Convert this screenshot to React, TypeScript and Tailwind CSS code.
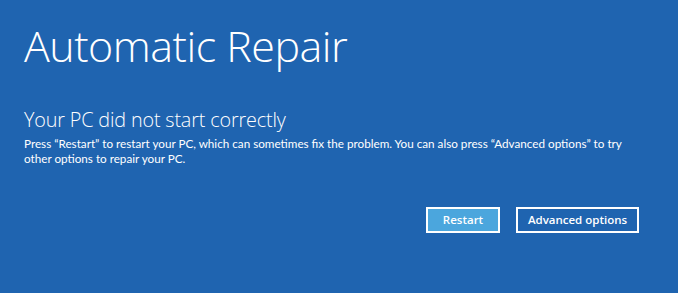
export default function App() {
  return (
    <div
      className="h-[293px] w-[678px] overflow-hidden bg-[#1f64b0] text-white"
      style={{ fontFamily: '"Open Sans", "Noto Sans", sans-serif' }}
    >
      <div className="flex flex-col pl-[24px]">
        <h1 className="mt-[20px] text-[43px] font-light leading-[52px] tracking-[-0.5px]">
          Automatic Repair
        </h1>
        <h2 className="mt-[36px] text-[19.8px] font-light leading-[24px] tracking-[-0.15px]">
          Your PC did not start correctly
        </h2>
        <p
          className="mt-[4px] text-[11.7px] leading-[15px]"
          style={{ fontFamily: 'Lato, "Open Sans", sans-serif' }}
        >
          Press “Restart” to restart your PC, which can sometimes fix the problem. You can also press “Advanced options” to try
          <br />
          other options to repair your PC.
        </p>
      </div>
      <div className="mt-[41px] flex justify-end gap-[16px] pr-[39px]">
        <button className="h-[26px] w-[74px] border-2 border-white bg-[#4ba6dd] text-[11.5px] font-semibold">
          Restart
        </button>
        <button className="h-[26px] w-[123px] border-2 border-white text-[11.5px] font-semibold">
          Advanced options
        </button>
      </div>
    </div>
  );
}
